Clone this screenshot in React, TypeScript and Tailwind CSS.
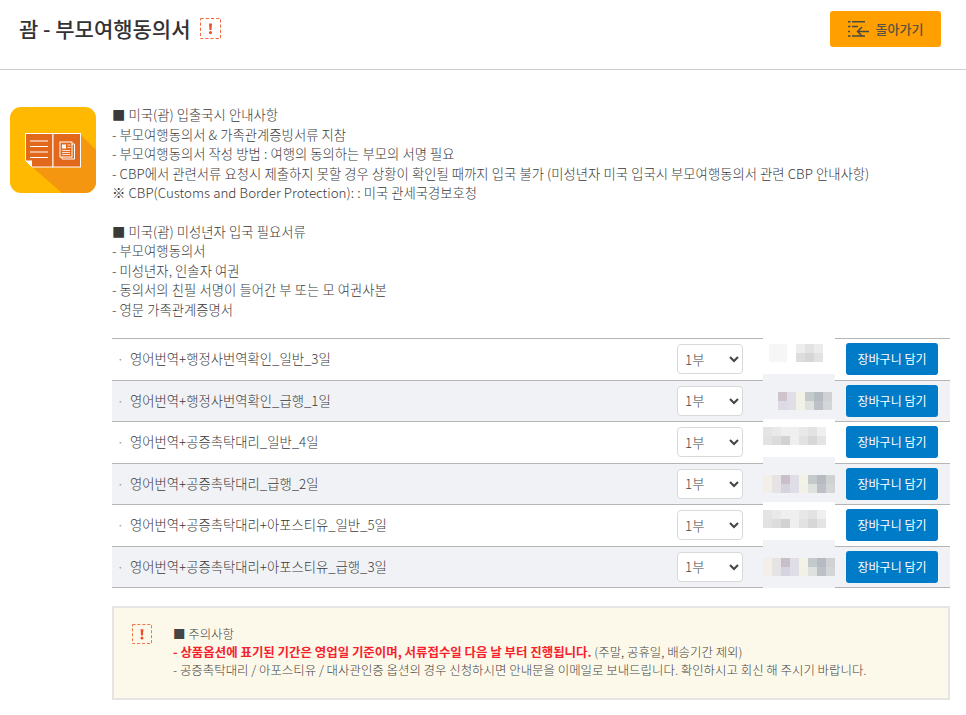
const font = { fontFamily: '"Noto Sans CJK KR", "Noto Sans", sans-serif' };

const W = "#ffffff";
const whitePatch = "-mt-[3px] pt-[8px] bg-white";
const grayPatch = "-mt-[7px] pt-[18px] bg-[#f1f2f6]";

const rows = [
  {
    name: "영어번역+행정사번역확인_일반_3일",
    bg: "bg-white",
    patchClass: whitePatch,
    shift: "-ml-[3px]",
    patch: [
      [W, "#f6f6f6", "#f6f6f6", W, "#ededed", "#e2e2e2", "#ececec", W],
      [W, "#f6f6f6", "#f6f6f6", W, "#dddddd", "#d6d6d6", "#e2e2e2", W],
    ],
  },
  {
    name: "영어번역+행정사번역확인_급행_1일",
    bg: "bg-[#f1f2f6]",
    patchClass: grayPatch,
    shift: "-ml-[3px]",
    patch: [
      ["#f1f2f6", "#f1f2f6", "#cfc4cb", "#e0dee7", "#f3f2e6", "#c4c9cb", "#b6bbc2", "#cfd1d2"],
      ["#f1f2f6", "#f1f2f6", "#dedae3", "#dfdde6", "#f1f1e8", "#dfe1de", "#bdc1c7", "#d4d5d6"],
    ],
  },
  {
    name: "영어번역+공증촉탁대리_일반_4일",
    bg: "bg-white",
    patchClass: whitePatch,
    shift: "",
    patch: [
      ["#e4e4e4", "#e9e9e9", "#efefef", "#efefef", "#e8e8e8", "#e2e2e2", "#efefef", W],
      ["#e2e2e2", "#dcdcdc", "#d2d2d2", "#efefef", "#e2e2e2", "#d7d7d7", "#e4e4e4", W],
    ],
  },
  {
    name: "영어번역+공증촉탁대리_급행_2일",
    bg: "bg-[#f1f2f6]",
    patchClass: grayPatch,
    shift: "",
    patch: [
      ["#f3eee8", "#e5e3e4", "#c9bfc9", "#dfdde6", "#f3f2e6", "#c4c9cb", "#b6bbc2", "#cfd1d2"],
      ["#f3eee8", "#e5e3e6", "#d6d3e0", "#dfdde6", "#f1f1e8", "#dfe1de", "#bdc1c7", "#d4d5d6"],
    ],
  },
  {
    name: "영어번역+공증촉탁대리+아포스티유_일반_5일",
    bg: "bg-white",
    patchClass: whitePatch,
    shift: "",
    patch: [
      ["#e4e4e4", "#e9e9e9", "#efefef", "#efefef", "#e8e8e8", "#e2e2e2", "#efefef", W],
      ["#e2e2e2", "#dcdcdc", "#d2d2d2", "#efefef", "#e2e2e2", "#d7d7d7", "#e4e4e4", W],
    ],
  },
  {
    name: "영어번역+공증촉탁대리+아포스티유_급행_3일",
    bg: "bg-[#f1f2f6]",
    patchClass: grayPatch,
    shift: "",
    patch: [
      ["#f3eee8", "#e5e3e4", "#c9bfc9", "#dfdde6", "#f3f2e6", "#c4c9cb", "#b6bbc2", "#cfd1d2"],
      ["#f3eee8", "#e5e3e6", "#d6d3e0", "#dfdde6", "#f1f1e8", "#dfe1de", "#bdc1c7", "#d4d5d6"],
    ],
  },
];

function AlertIcon({ className }: { className?: string }) {
  return (
    <svg viewBox="0 0 21 21" className={className} fill="none">
      <rect x="0.5" y="0.5" width="20" height="20" stroke="#f26a3d" strokeWidth="1" strokeDasharray="3.2 2" />
      <path d="M9 5.500h3l-.5 6.500h-2z" fill="#ee4f2b" />
      <circle cx="10.500" cy="14.600" r="1.600" fill="#ee4f2b" />
    </svg>
  );
}

function BookLogo() {
  return (
    <svg viewBox="0 0 86 86" className="h-[86px] w-[86px] shrink-0">
      <rect width="86" height="86" rx="11" fill="#ffb900" />
      <path d="M70 27 L86 43 V75 A11 11 0 0 1 75 86 H52 L20 58 Z" fill="#f4960f" />
      <path d="M15.500 26.500H43V60H22l-6.500-6.500z" fill="#e2691c" stroke="#fff" strokeWidth="1" />
      <rect x="43" y="26.500" width="27.500" height="33.500" fill="#e2691c" stroke="#fff" strokeWidth="1" />
      <path d="M15.500 53.500h6.500V60z" fill="#fff" />
      <path d="M20 34h18M20 39.500h18M20 45h18M20 50.500h18" stroke="#fff" strokeWidth="1.200" />
      <rect x="50" y="35" width="12" height="15" fill="#e2691c" stroke="#fff" strokeWidth="1" />
      <path d="M62 37h2.500v15H52v-2" stroke="#fff" strokeWidth="1" fill="none" />
      <rect x="52" y="37.500" width="4" height="4" fill="#fff" />
      <path d="M57.500 38h3M57.500 40.500h3M52 43.500h8M52 45.500h8M52 47.500h8" stroke="#fff" strokeWidth="0.800" />
    </svg>
  );
}

function BackIcon() {
  return (
    <svg viewBox="0 0 21 16" className="h-4 w-[21px]" fill="none" stroke="#4a4a44">
      <path d="M0 .8h2.500M4 .8h13" strokeWidth="1.500" />
      <path d="M0 5.500h2.500M4 5.500h6M0 10.500h2M0 15h2.500M4 15h13" strokeWidth="1.500" />
      <path d="M21 10.500H9.500M14 6l-4.500 4.500L14 15" strokeWidth="1.500" />
    </svg>
  );
}

function Mosaic({ cells, patchClass, shift }: { cells: string[][]; patchClass: string; shift: string }) {
  return (
    <div className={`relative -mb-px flex w-[72px] shrink-0 items-start self-stretch ${patchClass}`}>
      <div className={`grid grid-cols-[repeat(8,9px)] grid-rows-[repeat(2,9px)] ${shift}`}>
        {cells.flat().map((c, i) => (
          <div key={i} style={{ backgroundColor: c }} />
        ))}
      </div>
    </div>
  );
}

export default function App() {
  return (
    <div style={font} className="min-h-[715px] w-[966px] overflow-hidden bg-white text-[#555]">
      <header className="flex h-[70px] items-center border-b border-[#cfcfcf] pb-3 pl-[19px] pr-[25px]">
        <h1 className="text-[21px] font-medium text-[#333]">괌 - 부모여행동의서</h1>
        <AlertIcon className="ml-[9px] h-[21px] w-[21px]" />
        <button className="ml-auto flex h-9 w-[111px] items-center justify-center gap-[7px] rounded-[3px] bg-[#ffa000] text-[13px] font-medium text-[#5a5240]">
          <BackIcon />
          돌아가기
        </button>
      </header>

      <main className="flex gap-4 pl-[10px] pr-4 pt-[37px]">
        <BookLogo />
        <div className="min-w-0 flex-1">
          <div className="-mt-[2px] text-[13.330px] font-light leading-[19.500px] text-[#3a3a3a] [word-spacing:0.2px]">
            <p>■ 미국(괌) 입출국시 안내사항</p>
            <p>- 부모여행동의서 &amp; 가족관계증빙서류 지참</p>
            <p>- 부모여행동의서 작성 방법 : 여행의 동의하는 부모의 서명 필요</p>
            <p>- CBP에서 관련서류 요청시 제출하지 못할 경우 상황이 확인될 때까지 입국 불가 (미성년자 미국 입국시 부모여행동의서 관련 CBP 안내사항)</p>
            <p>※ CBP(Customs and Border Protection): : 미국 관세국경보호청</p>
            <p className="mt-[19px]">■ 미국(괌) 미성년자 입국 필요서류</p>
            <p>- 부모여행동의서</p>
            <p>- 미성년자, 인솔자 여권</p>
            <p>- 동의서의 친필 서명이 들어간 부 또는 모 여권사본</p>
            <p>- 영문 가족관계증명서</p>
          </div>

          <div className="mt-[19px] border-b border-[#b5b5b5]">
            {rows.map((row) => (
              <div key={row.name} className={`flex h-[41.500px] items-center border-t border-[#b5b5b5] pl-[5px] pr-3 ${row.bg}`}>
                <span className="w-[13px] text-[12px] text-[#999]">·</span>
                <span className="text-[13.330px] font-light text-[#3a3a3a]">{row.name}</span>
                <select className="ml-auto mr-5 h-[30px] w-[66px] rounded-[4px] border border-[#d9d9d9] bg-white pl-[3px] text-[13.330px] font-light text-[#444]">
                  <option>1부</option>
                </select>
                <Mosaic cells={row.patch} patchClass={row.patchClass} shift={row.shift} />
                <button className="ml-[11px] h-8 w-[92px] shrink-0 rounded-[3px] bg-[#007bc7] text-[12px] text-white">
                  장바구니 담기
                </button>
              </div>
            ))}
          </div>

          <section className="mt-[18px] flex h-[94px] border-2 border-[#e5e5e3] bg-[#fdf9ea] pl-[18px] pt-4">
            <AlertIcon className="h-5 w-5 shrink-0" />
            <div className="ml-[21px] pt-[1px] text-[12.440px] font-light leading-[18px] text-[#444]">
              <p>■ 주의사항</p>
              <p>
                <strong className="font-bold text-[#f5222d]">- 상품옵션에 표기된 기간은 영업일 기준이며, 서류접수일 다음 날 부터 진행됩니다.</strong> (주말, 공휴일, 배송기간 제외)
              </p>
              <p>- 공증촉탁대리 / 아포스티유 / 대사관인증 옵션의 경우 신청하시면 안내문을 이메일로 보내드립니다. 확인하시고 회신 해 주시기 바랍니다.</p>
            </div>
          </section>
        </div>
      </main>
    </div>
  );
}
